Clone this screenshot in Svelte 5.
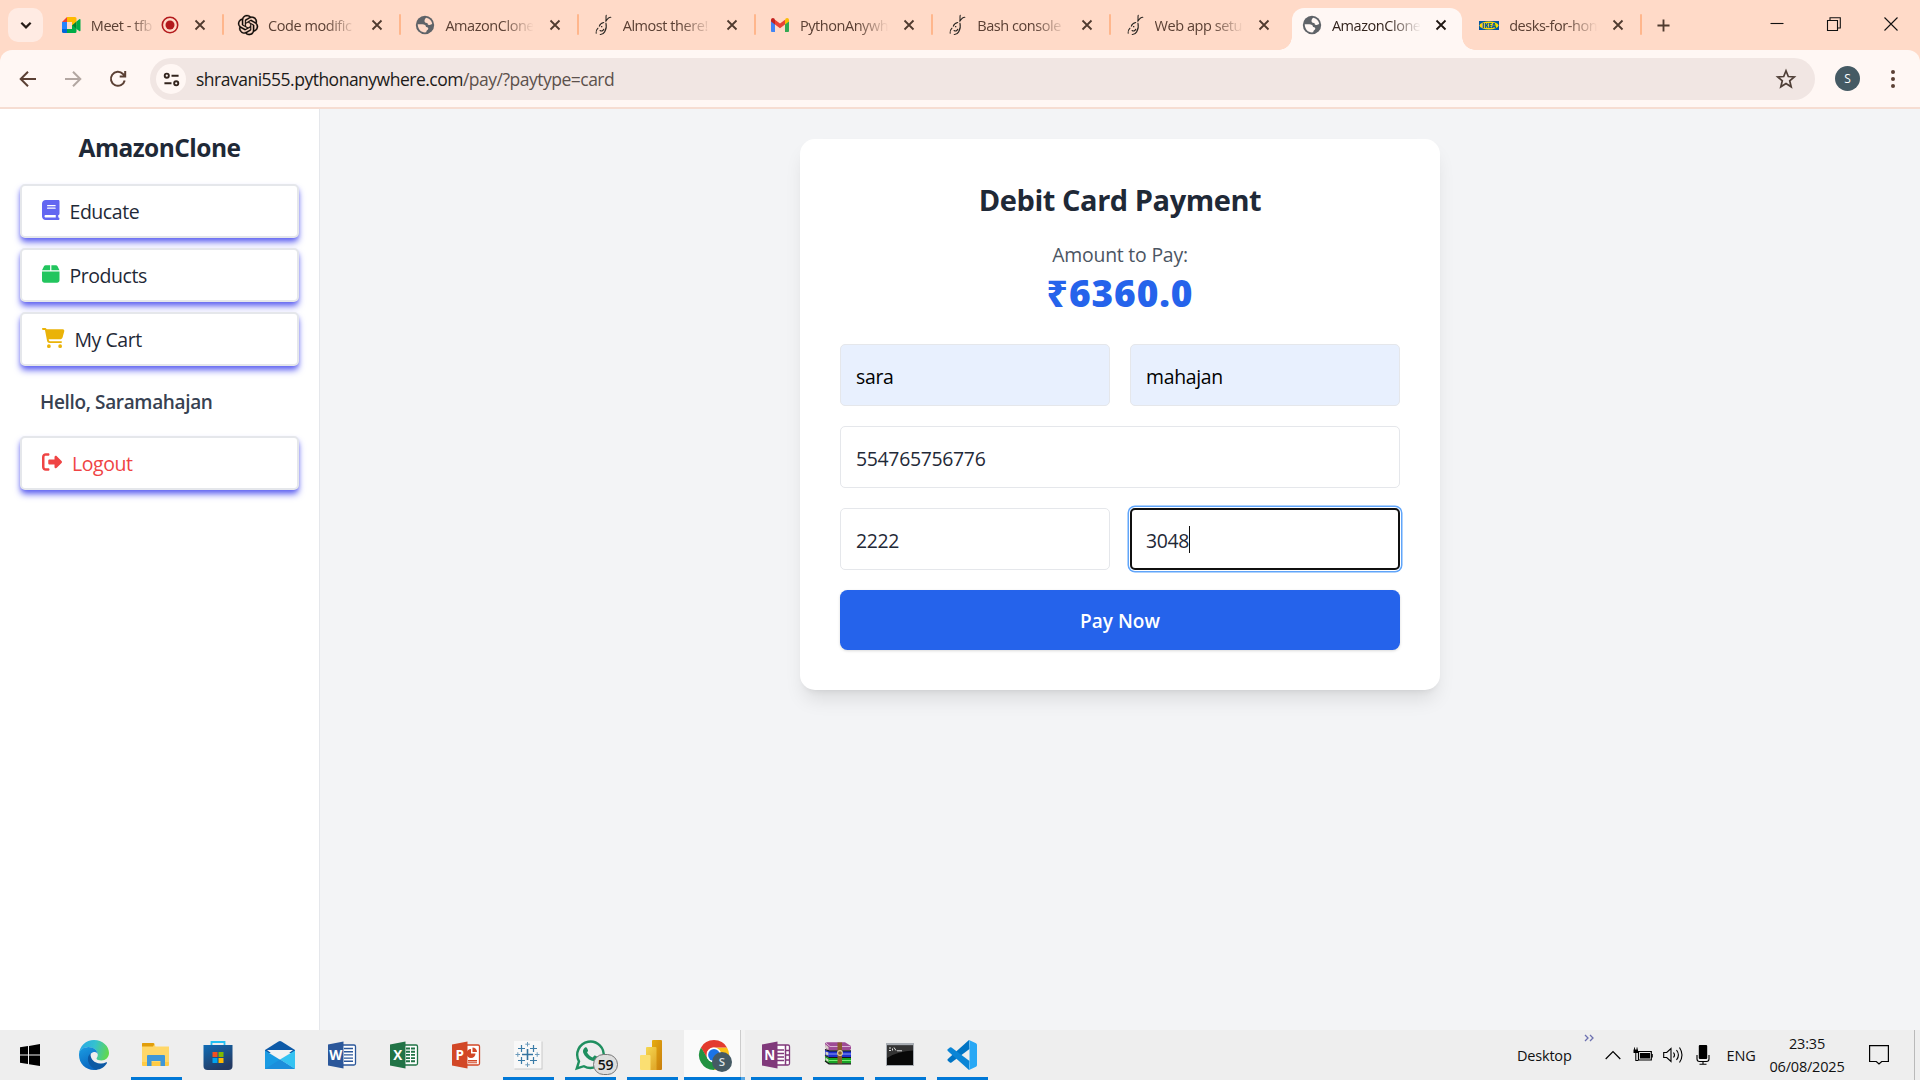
<script>
  const tabs = [
    { icon: 'meet', title: 'Meet - tfb', recording: true },
    { icon: 'gpt', title: 'Code modific' },
    { icon: 'globe', title: 'AmazonClone' },
    { icon: 'snake', title: 'Almost there!' },
    { icon: 'gmail', title: 'PythonAnywh' },
    { icon: 'snake', title: 'Bash console' },
    { icon: 'snake', title: 'Web app setu' },
    { icon: 'globe', title: 'AmazonClone', active: true },
    { icon: 'ikea', title: 'desks-for-hon' }
  ];

  const apps = [
    { id: 'start' },
    { id: 'edge' },
    { id: 'explorer', open: true },
    { id: 'store' },
    { id: 'mail' },
    { id: 'word' },
    { id: 'excel' },
    { id: 'powerpoint' },
    { id: 'tableau', open: true },
    { id: 'whatsapp', open: true },
    { id: 'powerbi', open: true },
    { id: 'chrome', open: true, current: true },
    { id: 'onenote', open: true },
    { id: 'winrar', open: true },
    { id: 'cmd', open: true },
    { id: 'vscode', open: true }
  ];

  const office = {
    word: { color: '#2b579a', letter: 'W' },
    excel: { color: '#217346', letter: 'X' },
    powerpoint: { color: '#d24726', letter: 'P' },
    onenote: { color: '#80397b', letter: 'N' }
  };

  const links = [
    {
      label: 'Educate', color: 'indigo', w: 448,
      d: 'M96 0C43 0 0 43 0 96V416c0 53 43 96 96 96H384h32c17.7 0 32-14.3 32-32s-14.3-32-32-32V384c17.7 0 32-14.3 32-32V32c0-17.7-14.3-32-32-32H384 96zm0 384H352v64H96c-17.7 0-32-14.3-32-32s14.3-32 32-32zm32-240c0-8.8 7.2-16 16-16H336c8.8 0 16 7.2 16 16s-7.2 16-16 16H144c-8.8 0-16-7.2-16-16zm16 48H336c8.8 0 16 7.2 16 16s-7.2 16-16 16H144c-8.8 0-16-7.2-16-16s7.2-16 16-16z'
    },
    {
      label: 'Products', color: 'green', w: 448,
      d: 'M50.7 58.5L0 160H208V32H93.7C75.5 32 58.9 42.3 50.7 58.5zM240 160H448L397.3 58.5C389.1 42.3 372.5 32 354.3 32H240V160zm208 32H0V416c0 35.3 28.7 64 64 64H384c35.3 0 64-28.7 64-64V192z'
    },
    {
      label: 'My Cart', color: 'yellow', w: 576,
      d: 'M0 24C0 10.7 10.7 0 24 0H69.5c22 0 41.5 12.8 50.6 32h411c26.3 0 45.5 25 38.6 50.4l-41 152.3c-8.5 31.4-37 53.3-69.5 53.3H170.7l5.4 28.5c2.2 11.3 12.1 19.5 23.6 19.5H488c13.3 0 24 10.7 24 24s-10.7 24-24 24H199.7c-34.6 0-64.3-24.6-70.7-58.5L77.4 54.5c-.7-3.8-4-6.5-7.9-6.5H24C10.7 48 0 37.3 0 24zM128 464a48 48 0 1 1 96 0 48 48 0 1 1 -96 0zm336-48a48 48 0 1 1 0 96 48 48 0 1 1 0-96z'
    }
  ];
  const logout =
    'M377.9 105.9L500.7 228.7c7.2 7.2 11.3 17.1 11.3 27.3s-4.1 20.1-11.3 27.3L377.9 406.1c-6.4 6.4-15 9.9-24 9.9c-18.7 0-33.9-15.2-33.9-33.9l0-62.1-128 0c-17.7 0-32-14.3-32-32l0-64c0-17.7 14.3-32 32-32l128 0 0-62.1c0-18.7 15.2-33.9 33.9-33.9c9 0 17.6 3.6 24 9.9zM160 96L96 96c-17.7 0-32 14.3-32 32l0 256c0 17.7 14.3 32 32 32l64 0c17.7 0 32 14.3 32 32s-14.3 32-32 32l-64 0c-53 0-96-43-96-96L0 128C0 75 43 32 96 32l64 0c17.7 0 32 14.3 32 32s-14.3 32-32 32z';
  const knot =
    'M22.2819 9.8211a5.9847 5.9847 0 0 0-.5157-4.9108 6.0462 6.0462 0 0 0-6.5098-2.9A6.0651 6.0651 0 0 0 4.9807 4.1818a5.9847 5.9847 0 0 0-3.9977 2.9 6.0462 6.0462 0 0 0 .7427 7.0966 5.98 5.98 0 0 0 .511 4.9107 6.051 6.051 0 0 0 6.5146 2.9001A5.9847 5.9847 0 0 0 13.2599 24a6.0557 6.0557 0 0 0 5.7718-4.2058 5.9894 5.9894 0 0 0 3.9977-2.9001 6.0557 6.0557 0 0 0-.7475-7.0729zm-9.022 12.6081a4.4755 4.4755 0 0 1-2.8764-1.0408l.1419-.0804 4.7783-2.7582a.7948.7948 0 0 0 .3927-.6813v-6.7369l2.02 1.1686a.071.071 0 0 1 .038.052v5.5826a4.504 4.504 0 0 1-4.4945 4.4944zm-9.6607-4.1254a4.4708 4.4708 0 0 1-.5346-3.0137l.142.0852 4.783 2.7582a.7712.7712 0 0 0 .7806 0l5.8428-3.3685v2.3324a.0804.0804 0 0 1-.0332.0615L9.74 19.9502a4.4992 4.4992 0 0 1-6.1408-1.6464zM2.3408 7.8956a4.485 4.485 0 0 1 2.3655-1.9728V11.6a.7664.7664 0 0 0 .3879.6765l5.8144 3.3543-2.0201 1.1685a.0757.0757 0 0 1-.071 0l-4.8303-2.7865A4.504 4.504 0 0 1 2.3408 7.872zm16.5963 3.8558L13.1038 8.364 15.1192 7.2a.0757.0757 0 0 1 .071 0l4.8303 2.7913a4.4944 4.4944 0 0 1-.6765 8.1042v-5.6772a.79.79 0 0 0-.407-.667zm2.0107-3.0231l-.142-.0852-4.7735-2.7818a.7759.7759 0 0 0-.7854 0L9.409 9.2297V6.8974a.0662.0662 0 0 1 .0284-.0615l4.8303-2.7866a4.4992 4.4992 0 0 1 6.6802 4.66zM8.3065 12.863l-2.02-1.1638a.0804.0804 0 0 1-.038-.0567V6.0742a4.4992 4.4992 0 0 1 7.3757-3.4537l-.142.0805L8.704 5.459a.7948.7948 0 0 0-.3927.6813zm1.0976-2.3654l2.602-1.4998 2.6069 1.4998v2.9994l-2.5974 1.4997-2.6067-1.4997Z';
</script>

{#snippet favicon(name, active)}
  {#if name === 'meet'}
    <svg class="fav" viewBox="0 0 20 20">
      <path d="M1 7 6 2v5z" fill="#ea4335" />
      <path d="M1 7h5v7H1z" fill="#2684fc" />
      <path d="M1 14h5v4H2.500Q1 18 1 16.500z" fill="#0066da" />
      <path d="M6 2h8q1.500 0 1.500 1.500V10H11V7H6z" fill="#ffba00" />
      <path d="M6 14h5v-4h4.500v6.500q0 1.500-1.500 1.500H6z" fill="#00ac47" />
      <path d="M11.500 10 15.500 6.500v7.500z" fill="#00832d" />
      <path d="m15.500 6.500 2.700-2.300q1.300-.8 1.300.7v10.300q0 1.500-1.300.7L15.500 14z" fill="#00ac47" />
    </svg>
  {:else if name === 'gpt'}
    <svg class="fav" viewBox="1 1 22 22"><path d={knot} fill="#120c09" stroke="#120c09" stroke-width=".3" transform="translate(.9 .9) scale(.93)" /></svg>
  {:else if name === 'globe'}
    <svg class="fav globe" class:light={active} viewBox="0 0 20 20">
      <circle cx="10" cy="10" r="9.200" />
      <path d="M11.300 2.700c3 .5 5.300 2.800 5.900 5.800-.8 1.200-1.800 1.600-3.200 1.400-1.200-.2-1.600-1-1.500-2-1.500.3-3-.4-3-1.800 0-1.700.8-2.900 1.800-3.400z" />
      <path d="M2.700 9.200h4.600c2.300 0 3.700 1 3.700 2.700 1.800-.1 2.600.9 2.200 2.100-.4 1.300-1.900 1.200-2 3.300-4.600.7-8.300-2.700-8.500-8.100z" />
    </svg>
  {:else if name === 'snake'}
    <svg class="fav tall" viewBox="0 0 20 24" fill="none" stroke="#2b2723" stroke-width="1.200" stroke-linecap="round">
      <path d="M13.500 1.500c-.6 2 .2 3.500-.4 6M18.500 3.500c-2.400 0-4 2-5.400 4.500" />
      <path d="M13.200 10c1 3.500.3 6.500-1.400 9.500-1 1.800-2.600 2.900-4.800 2.800" />
      <path d="M10.800 9.200C8 9.800 6.500 11.300 6 13.200M4.500 15.500c-1.600 1.500-2.300 3.300-2 5.500M6.800 18c1.500 1 3.300.5 4-1.300M8.300 13.800h.5" />
    </svg>
  {:else if name === 'gmail'}
    <svg class="fav" viewBox="0 0 20 20">
      <path d="M1 6v10.200Q1 17 2 17h3V8.500z" fill="#4285f4" />
      <path d="M15 8.500V17h3q1 0 1-.8V6z" fill="#34a853" />
      <path d="M15 5v4.500l4-3V5c0-2-2-2.700-3.300-1.600z" fill="#fbbc04" />
      <path d="M5 9.500V4.800L10 8.600l5-3.800v4.700l-5 3.700z" fill="#ea4335" />
      <path d="M1 5v1.500l4 3V4.800l-.7-1.400C3 2.300 1 3 1 5z" fill="#c5221f" />
    </svg>
  {:else}
    <svg class="fav" viewBox="0 0 20 20">
      <path d="M0 6h20v9H0z" fill="#0058a3" />
      <ellipse cx="10" cy="10.500" rx="9.500" ry="4" fill="#ffdb00" />
      <text x="10" y="12.700" text-anchor="middle" class="ikea">IKEA</text>
    </svg>
  {/if}
{/snippet}

{#snippet cross()}
  <svg class="close" viewBox="0 0 12 12"><path d="m1.500 1.500 9 9m0-9-9 9" /></svg>
{/snippet}

{#snippet appIcon(id)}
  {#if id === 'start'}
    <svg class="icon" viewBox="0 0 30 30"><path d="m5 7.300 8-1.300v8.500H5zm9-1.400 11-1.800v10.400H14zM5 15.500h8V24l-8-1.200zm9 0h11V26l-11-1.800z" /></svg>
  {:else if id === 'edge'}
    <svg class="icon" viewBox="0 0 30 30">
      <defs>
        <linearGradient id="e1" x1="0" y1="0.300" x2="1" y2="0.500"><stop offset="0" stop-color="#28a8e6" /><stop offset="0.500" stop-color="#35c1cf" /><stop offset="1" stop-color="#62d84c" /></linearGradient>
        <linearGradient id="e2" x1="0" y1="0" x2="0.400" y2="1"><stop offset="0" stop-color="#1b9de2" /><stop offset="1" stop-color="#0a67c0" /></linearGradient>
      </defs>
      <path d="M0 14C.5 6 7 0 15 0c8.500 0 15 6 15 13 0 4.500-3.500 7.500-7.500 7.500-3 0-5-1-5-2 0-.8 1.300-1.500 1.300-3.800C18.800 11 15 7 9.500 7 5 7 1.500 9.500 0 14z" fill="url(#e1)" />
      <path d="M0 15C0 10.500 4 7 9.500 7c5 0 9.200 3.500 9.300 7.500 0-1.500-2-3-4-2.500-4 1-5.300 5-4 9 1.500 4.500 5 7 8 8.500C9 32 0 25 0 15z" fill="url(#e2)" />
      <path d="M11.500 13.500C7 16.500 8 26 17 29.700c5 0 9-3 11-6.700.3-.7-.2-1-.8-.7-2 1-4 1.400-6 1.200-6-.5-9.800-4-9.700-10z" fill="#0c59a4" />
    </svg>
  {:else if id === 'explorer'}
    <svg class="icon" viewBox="0 0 30 30">
      <path d="M1 3.500Q1 3 2 3h10q1 0 1.500 1l1 2.500H28v18q0 1.500-1.500 1.500h-24Q1 26 1 24.500z" fill="#ffd768" />
      <path d="M1 3.500Q1 3 2 3h10q1 0 1.500 1L12 6.500H1z" fill="#e19d0a" />
      <path d="M1 22h27v2.500q0 1.500-1.500 1.500h-24Q1 26 1 24.500z" fill="#ffcb45" />
      <path d="M6 26V16q0-1 1-1h16q1 0 1 1v10h-4.500v-5h-9v5z" fill="#3f97d8" />
    </svg>
  {:else if id === 'store'}
    <svg class="icon" viewBox="0 0 30 30">
      <defs><linearGradient id="s1" x1="0" y1="0" x2="0.500" y2="1"><stop offset="0" stop-color="#0f6cb6" /><stop offset="1" stop-color="#243a62" /></linearGradient></defs>
      <path d="M8.500 5.500V2h13v3.500" fill="none" stroke="#22c0f4" stroke-width="1.800" />
      <path d="M.5 5h29v21q0 4-4 4h-21q-4 0-4-4z" fill="url(#s1)" />
      <path d="M9.500 12h5v5h-5z" fill="#f25022" /><path d="M15.500 12h5v5h-5z" fill="#7fba00" />
      <path d="M9.500 18h5v5h-5z" fill="#00a4ef" /><path d="M15.500 18h5v5h-5z" fill="#ffb900" />
    </svg>
  {:else if id === 'mail'}
    <svg class="icon" viewBox="0 0 30 30">
      <path d="M0 10 13.500 1.500q1.500-.8 3 0L30 10v3H0z" fill="#0d5aa7" />
      <path d="M2 10h26L15 20z" fill="#f3f3f3" />
      <path d="M0 10.500 30 29H0z" fill="#1a9be3" />
      <path d="M30 10.500V29L15 19.500z" fill="#35c3f2" />
      <path d="M0 29 15 19.500 30 29z" fill="#1b8edb" />
    </svg>
  {:else if office[id]}
    <svg class="icon" viewBox="0 0 30 30">
      <path d="M14 5h13q1.500 0 1.500 1.500v17Q28.500 25 27 25H14z" fill="#fff" stroke={office[id].color} stroke-width="1.300" />
      {#if id === 'word'}
        <path d="M17 8.500h9m-9 3.200h9m-9 3.200h9m-9 3.200h9m-9 3.200h9" stroke="#2b579a" stroke-width="1.400" />
      {:else if id === 'excel'}
        <path d="M17 8.500h4m1 0h4m-9 3.200h4m1 0h4m-9 3.200h4m1 0h4m-9 3.200h4m1 0h4m-9 3.200h4m1 0h4" stroke="#217346" stroke-width="1.900" />
      {:else if id === 'powerpoint'}
        <path d="M20 9a4.500 4.500 0 1 0 4.500 4.500H20zM17 20h9v1.500h-9zm0 2.300h9v1h-9z" fill="#d24726" /><path d="M21.500 7.500A4.500 4.500 0 0 1 26 12h-4.500z" fill="#d24726" />
      {:else}
        <path d="M16 10h7m-7 3.500h7m-7 3.500h7m-7 3.500h7M24.500 5v20M25 10.500h3.500M25 15h3.500M25 20h3.500" stroke="#80397b" stroke-width="1.500" />
      {/if}
      <path d="M1 4.500 16.500 1.500v27L1 25.500z" fill={office[id].color} />
      <text x="8.700" y="20" text-anchor="middle" class="letter">{office[id].letter}</text>
    </svg>
  {:else if id === 'tableau'}
    <svg class="icon" viewBox="0 0 30 30" fill="none">
      <path d="M1.500 1.500h28v28h-28z" fill="#c9c9c9" /><path d="M1 1h27.500v27.500H1z" fill="#f8f8f8" />
      <path d="M14.500 9v11M9 14.500h11" stroke="#33739f" stroke-width="1.600" />
      <path d="M8.500 5v7M5 8.500h7M20.500 5v7M17 8.500h7M8.500 17v7M5 20.500h7M20.500 17v7M17 20.500h7" stroke="#3b7ca8" stroke-width="1.200" />
      <path d="M14.500 2v4.500M12.300 4.200h4.500M14.500 22.500V27M12.300 24.800h4.500M4.800 12.300v4.500M2.500 14.500H7M24.200 12.300v4.500M22 14.500h4.500" stroke="#6b9abb" stroke-width="1" />
    </svg>
  {:else if id === 'whatsapp'}
    <svg class="icon" viewBox="0 0 30 30">
      <path d="M1.800 28.400 4 21.300a13.200 13.200 0 1 1 4.900 4.900z" fill="none" stroke="#1f8f5f" stroke-width="2.400" />
      <path d="M10 7.500c.8-.6 1.700-.3 2 .4l1 2.300c.2.700-.2 1.300-1 2.100.9 2.200 3 4 5.500 5.200l1.500-1.600c.5-.5 1-.4 1.500-.1l2.300 1.100c1 .5.500 1.900-.1 2.700-1.300 1.600-3.500 1.900-5.700 1.200-4.300-1.400-7.500-4.600-8.800-8.100C7.500 10.500 8.500 8.500 10 7.500z" fill="#1f8f5f" />
    </svg>
    <span class="badge">59</span>
  {:else if id === 'powerbi'}
    <svg class="icon" viewBox="0 0 30 30">
      <defs>
        <linearGradient id="p1" x1="0" y1="0" x2="1" y2="1"><stop offset="0" stop-color="#e6ad10" /><stop offset="1" stop-color="#c87e0e" /></linearGradient>
        <linearGradient id="p2" x1="0" y1="0" x2="0.600" y2="1"><stop offset="0" stop-color="#f6d751" /><stop offset="1" stop-color="#e2ac2d" /></linearGradient>
      </defs>
      <path d="M15 1q0-1 1-1h8q1 0 1 1v28q0 1-1 1h-9z" fill="url(#p1)" />
      <path d="M9 8q0-1 1-1h8.500q1 0 1 1v22H9z" fill="url(#p2)" />
      <path d="M3 16q0-1 1-1h8.500q1 0 1 1v14H4q-1 0-1-1z" fill="#fbdf72" />
    </svg>
  {:else if id === 'chrome'}
    <svg class="icon" viewBox="0 0 30 30">
      <path d="M15 15 28 7.500A15 15 0 0 1 15 30z" fill="#fbc116" />
      <path d="M15 7.500h13l-6.500 11z" fill="#fbc116" />
      <path d="M21.500 18.800 15 30A15 15 0 0 1 2 7.500L8.500 18.700z" fill="#229342" />
      <path d="M2 7.500Q6 0 15 0q9 0 13 7.500H15q-5 0-7.200 5L8.500 18.700z" fill="#e33b2e" />
      <path d="M2 7.500 8.500 18.700 5 19z" fill="#229342" />
      <circle cx="15" cy="15" r="7.500" fill="#fff" /><circle cx="15" cy="15" r="5.900" fill="#1a73e8" />
    </svg>
    <span class="profile">S</span>
  {:else if id === 'winrar'}
    <svg class="icon" viewBox="0 0 30 30">
      <path d="m2 3 2-.8h18l6 3.800v3l-1 1H6L3 9z" fill="#9d4b95" /><path d="m3 3.200 4 3.300h20.500" fill="none" stroke="#e0bcdc" stroke-width=".9" />
      <path d="m2 10 4 1h22v6H6l-4-2z" fill="#1c2fd0" /><path d="M6 14h22" stroke="#8f9df5" stroke-width="1" />
      <path d="m2 16 4 2h22v5.500H6L2 21z" fill="#19a325" /><path d="M6 20.500h22" stroke="#79ee75" stroke-width="1" />
      <path d="m2 9.500 4 1.300h22M2 15.500l4 2h22M2 21l4 2.800h22" fill="none" stroke="#161616" stroke-width="1.200" />
      <path d="m2.500 4.500 3 2.500v2.500l-3-1.500zm0 7 3 1v3l-3-1zm0 6 3 2v2.500l-3-2z" fill="#d6d2c4" />
      <path d="M14.500 2.500h4.500v21h-4.500z" fill="#8a5a2c" /><circle cx="17" cy="13" r="2.400" fill="none" stroke="#ded09b" stroke-width="1.100" />
    </svg>
  {:else if id === 'cmd'}
    <svg class="icon" viewBox="0 0 30 30">
      <path d="M1 3h28v23H1z" fill="#a9aeb4" /><path d="M2 5.500h26V25H2z" fill="#080808" /><path d="M2 5.500h26v5Q13 11 2 18z" fill="#343434" />
      <path d="M4 8h2m-2 2.500h2m1.500-2v2M9 7.500l2 3m1 .3h5" stroke="#ddd" stroke-width="1" fill="none" />
    </svg>
  {:else}
    <svg class="icon" viewBox="0 0 30 30">
      <path d="M22 0 0.800 19q-.8.800 0 1.700l2 1.700q.8.600 1.700 0L22.500 9z" fill="#0074c4" />
      <path d="M22 30 .8 11q-.8-.8 0-1.700l2-1.700q.8-.6 1.700 0L22.500 21z" fill="#0a85d6" />
      <path d="M22.500 3v24L22 30l7-3.300q1-.5 1-1.700V5q0-1.200-1-1.700L22 0z" fill="#29a8f5" />
    </svg>
  {/if}
{/snippet}

<div class="screen">
  <header class="tabstrip">
    <button class="search" aria-label="Search tabs"><svg viewBox="0 0 12 12"><path d="m2 4 4 4 4-4" /></svg></button>
    <div class="tabs">
      {#each tabs as tab, i}
        <div class="tab" class:active={tab.active} class:separated={!tab.active && i !== 6}>
          {@render favicon(tab.icon, tab.active)}
          <span class="title" class:short={tab.recording}>{tab.title}</span>
          {#if tab.recording}
            <svg class="rec" viewBox="0 0 18 18"><circle cx="9" cy="9" r="7.700" fill="none" stroke="#b3191c" stroke-width="1.600" /><circle cx="9" cy="9" r="4.500" fill="#b3191c" /></svg>
          {/if}
          {@render cross()}
        </div>
      {/each}
    </div>
    <svg class="plus" viewBox="0 0 14 14"><path d="M7 .5v13M.5 7h13" /></svg>
    <div class="window">
      <svg viewBox="0 0 14 14"><path d="M.5 6.500h13" /></svg>
      <svg viewBox="0 0 14 14"><path d="M.5 3.500h10v10H.5zM3 3.500V.7h10.300V11h-2.800" /></svg>
      <svg viewBox="0 0 14 14"><path d="m.5.5 13 13m0-13-13 13" /></svg>
    </div>
  </header>

  <div class="toolbar">
    <nav class="nav">
      <svg viewBox="0 0 20 20"><path d="M18 10H3m7-7.300L2.700 10l7.300 7.300" /></svg>
      <svg class="off" viewBox="0 0 20 20"><path d="M2 10h15m-7-7.300 7.300 7.300-7.300 7.300" /></svg>
      <svg viewBox="0 0 20 20"><path d="M16.700 11.500A7 7 0 1 1 15 5l2 2m.2-5v5.500h-5.500" /></svg>
    </nav>
    <div class="omnibox">
      <span class="info"><svg viewBox="0 0 18 18"><circle cx="4" cy="5" r="2.200" /><circle cx="14" cy="13" r="2.200" /><path d="M9 5h7.500M1.500 13H9" /></svg></span>
      <span class="url">shravani555.pythonanywhere.com<em>/pay/?paytype=card</em></span>
      <svg class="star" viewBox="0 0 20 20"><path d="m10 1.800 2.300 5.700 6 .4-4.600 3.900 1.500 6L10 14.500l-5.200 3.300 1.500-6L1.700 7.900l6-.4z" /></svg>
    </div>
    <span class="avatar">S</span>
    <svg class="dots" viewBox="0 0 6 20"><circle cx="3" cy="3" r="2" /><circle cx="3" cy="10" r="2" /><circle cx="3" cy="17" r="2" /></svg>
  </div>

  <div class="page">
    <aside>
      <h1>AmazonClone</h1>
      <ul>
        {#each links as link}
          <li>
            <svg class={link.color} class:wide={link.w === 576} viewBox="0 0 {link.w} 512"><path d={link.d} /></svg>
            <span>{link.label}</span>
          </li>
        {/each}
      </ul>
      <p class="hello">Hello, Saramahajan</p>
      <div class="logout">
        <svg viewBox="0 0 512 512"><path d={logout} /></svg>
        <span>Logout</span>
      </div>
    </aside>
    <main>
      <section class="card">
        <h2>Debit Card Payment</h2>
        <p class="label">Amount to Pay:</p>
        <p class="amount">₹6360.0</p>
        <div class="fields">
          <div class="field filled"><span>sara</span></div>
          <div class="field filled"><span>mahajan</span></div>
          <div class="field full"><span>554765756776</span></div>
          <div class="field"><span>2222</span></div>
          <div class="field focused"><span>3048</span><i class="caret"></i></div>
        </div>
        <button class="pay">Pay Now</button>
      </section>
    </main>
  </div>

  <footer>
    <div class="apps">
      {#each apps as app}
        <div class="app" class:open={app.open} class:current={app.current}>{@render appIcon(app.id)}</div>
      {/each}
    </div>
    <div class="tray">
      <span class="desk">Desktop</span>
      <svg class="more" viewBox="0 0 10 8"><path d="m1 1 3 3-3 3m5-6 3 3-3 3" /></svg>
      <svg class="up" viewBox="0 0 16 16"><path d="m.7 12 7.300-7.500L15.300 12" /></svg>
      <svg class="sys" viewBox="0 0 20 20">
        <path d="M5.500 6.500h12.800v8.500H5.500z" fill="none" stroke="#000" /><path d="M7 8h10v5.500H7zM18.500 9h1.300v3.500h-1.300zM.5 4.500h4.500v3.500H.5zM2.300 8h1v7h2v1h-3zM1 2.500h.9v2H1zm2.600 0h.9v2h-.9z" />
      </svg>
      <svg class="sys line" viewBox="0 0 20 20"><path d="M.7 7.500h3L8 3.500v13l-4.300-4H.7zM10.500 7.500q2 2.500 0 5M13.500 5q3.800 5 0 10M16.500 2.500q5 7.500 0 15" /></svg>
      <svg class="sys" viewBox="0 0 20 20"><rect x="5.800" y="0" width="8.400" height="14" rx="1" /><path d="M4 10v4q0 2.500 2.500 2.500h7q2.500 0 2.500-2.500v-4M10 16.500v3M6.500 19.300h7" fill="none" stroke="#000" stroke-width="1.100" /></svg>
      <span class="lang">ENG</span>
      <div class="clock"><span>23:35</span><span>06/08/2025</span></div>
      <svg class="note" viewBox="0 0 20 20"><path d="M.6.700h18.800v15.800h-6.700L10 19l-2.700-2.500H.6z" /></svg>
    </div>
  </footer>
</div>

<style>
  :global(body) { margin: 0; overflow: hidden; }
  * { box-sizing: border-box; }
  h1, h2, p, ul { margin: 0; padding: 0; }
  .screen {
    width: 1920px; height: 1080px; display: flex; flex-direction: column;
    font-family: 'Open Sans', 'Noto Sans', sans-serif; background: #ffdac8;
  }
  svg { display: block; flex: none; overflow: visible; }
  button { border: 0; padding: 0; font: inherit; }

  .tabstrip { height: 50px; flex: none; display: flex; padding-left: 8px; align-items: flex-start; }
  .search { width: 35px; height: 34px; margin: 8px 4.800px 0 0; border-radius: 10px; background: #ffebe3; display: grid; place-items: center; }
  .search svg { width: 14px; height: 14px; fill: none; stroke: #261b16; stroke-width: 1.900; }
  .tabs { display: flex; height: 50px; }
  .tab { position: relative; width: 177.300px; height: 50px; padding: 0 18px 0 13px; display: flex; align-items: center; color: #5b4034; }
  .separated::after { content: ''; position: absolute; right: 1px; top: 14px; width: 2px; height: 21px; border-radius: 1px; background: #ffb68c; }
  .fav { width: 20px; height: 20px; }
  .fav.tall { height: 22px; }
  .globe circle { fill: #5f6368; }
  .globe path { fill: #ffdac8; }
  .globe.light path { fill: #fff7f4; }
  .title {
    width: 88px; margin-left: 10px; white-space: nowrap; font-size: 14.500px; letter-spacing: -0.450px; line-height: 24px; padding-top: 1px;
    -webkit-mask: linear-gradient(90deg, #000 65%, transparent 101%); mask: linear-gradient(90deg, #000 65%, transparent 101%);
  }
  .title.short { width: 63px; }
  .rec { width: 18px; height: 18px; margin-left: 7px; }
  .close { width: 12px; height: 12px; margin-left: auto; fill: none; stroke: #4f3a2f; stroke-width: 1.800; margin-right: 1px; }
  .active { color: #33241d; z-index: 1; }
  .active .close { stroke: #1f1612; }
  .active::before {
    content: ''; position: absolute; z-index: -1; left: 3.500px; right: 4.500px; top: 8px; bottom: 0;
    background: #fff7f4; border-radius: 12px 12px 0 0;
  }
  .active::after {
    content: ''; position: absolute; z-index: -1; left: -9.500px; right: -8.500px; bottom: 0; height: 13px;
    background:
      radial-gradient(circle at 0 0, transparent 12.500px, #fff7f4 13px) left / 13px 13px no-repeat,
      radial-gradient(circle at 100% 0, transparent 12.500px, #fff7f4 13px) right / 13px 13px no-repeat;
  }
  .plus { width: 13px; height: 13px; margin: 18.500px 0 0 13.500px; stroke: #4f3a2f; stroke-width: 2; }
  .window { margin: 17px 22px 0 auto; display: flex; gap: 43px; }
  .window svg { width: 14px; height: 14px; fill: none; stroke: #111; stroke-width: 1.100; }

  .toolbar { height: 59px; flex: none; display: flex; align-items: flex-start; background: #fff7f4; border-bottom: 2px solid #f6ddd2; border-radius: 12px 12px 0 0; padding: 8px 24px 0 18px; }
  .nav { display: flex; gap: 25px; margin: 10.500px 22px 0 0; }
  .nav svg { width: 20px; height: 20px; fill: none; stroke: #5b4034; stroke-width: 2; }
  .nav .off { stroke: #b3a7a2; }
  .omnibox { width: 1665px; height: 42px; border-radius: 21px; background: #f1e6e3; display: flex; align-items: center; padding: 0 19px 0 6px; }
  .info { width: 30px; height: 30px; border-radius: 50%; background: #fff7f4; display: grid; place-items: center; }
  .info svg { width: 17px; height: 17px; fill: none; stroke: #33241d; stroke-width: 2; }
  .url { margin-left: 10px; font-size: 17.500px; letter-spacing: -0.500px; line-height: 30px; color: #201a18; }
  .url em { font-style: normal; color: #5c514c; }
  .star { margin-left: auto; width: 20px; height: 20px; fill: none; stroke: #4f3f37; stroke-width: 1.700; }
  .avatar { width: 25px; height: 25px; margin: 8px 0 0 20px; border-radius: 50%; background: #455a64; color: #fff; font-size: 12px; line-height: 25px; text-align: center; }
  .dots { width: 6px; height: 20px; margin: 10.500px 0 0 29.500px; fill: #5b4034; }

  .page { flex: 1; display: flex; min-height: 0; }
  aside { width: 320px; background: #fff; border-right: 1px solid #e5e7eb; padding: 19px 20px 0; font-size: 19.500px; letter-spacing: -0.450px; color: #1f2937; }
  h1 { font-size: 24.500px; letter-spacing: -0.550px; line-height: 40px; font-weight: 700; text-align: center; color: #1f2937; margin-bottom: 16px; }
  ul { list-style: none; display: flex; flex-direction: column; gap: 10px; }
  li, .logout {
    height: 54px; width: 279px; border: 2px solid #e5e7eb; border-radius: 5px; background: #fff; padding: 0 20px;
    display: flex; align-items: center; gap: 10px; box-shadow: 0 5px 7.500px -1px #6366f1, 0 2.500px 5px -2.500px #6366f1;
  }
  li span, .logout span { line-height: 30px; padding-top: 2px; }
  li svg, .logout svg { width: 17.500px; height: 20px; margin-bottom: 2px; }
  li svg.wide { width: 22.500px; }
  .indigo { fill: #6366f1; } .green { fill: #22c55e; } .yellow { fill: #eab308; }
  .hello { font-size: 19px; font-weight: 600; letter-spacing: -0.350px; color: #374151; line-height: 30px; padding-left: 20px; margin: 21px 0 19px; }
  .logout { color: #ef4444; }
  .logout svg { width: 20px; fill: #ef4444; }

  main { flex: 1; background: #f3f4f6; display: flex; justify-content: center; align-items: flex-start; padding-top: 30px; }
  .card { width: 640px; height: 551px; background: #fff; border-radius: 15px; padding: 40px; box-shadow: 0 12.500px 19px -4px rgba(0, 0, 0, 0.100), 0 5px 7.500px -5px rgba(0, 0, 0, 0.100); }
  h2 { font-size: 29px; letter-spacing: -0.450px; line-height: 40px; font-weight: 700; text-align: center; color: #1f2937; margin: 1px 0 20px; }
  .label { text-align: center; font-size: 19.400px; letter-spacing: -0.200px; line-height: 30px; color: #4b5563; }
  .amount { text-align: center; font-size: 37px; letter-spacing: 0.900px; line-height: 46px; font-weight: 800; color: #2563eb; margin-bottom: 28px; }
  .fields { display: grid; grid-template-columns: 1fr 1fr; gap: 20px; margin-bottom: 20px; }
  .field { height: 62px; border: 1px solid #e5e7eb; border-radius: 5px; padding: 2px 15px 0; display: flex; align-items: center; font-size: 19.400px; letter-spacing: -0.300px; color: #1f2937; }
  .field.filled { background: #e8f0fe; color: #000; }
  .field.full { grid-column: span 2; }
  .field.focused { border: 2px solid #101010; padding: 2px 14px 0; box-shadow: 0 0 0 1px #fff, 0 0 0 2.500px #60a5fa; }
  .caret { width: 1px; height: 27px; margin-bottom: 2px; background: #111; }
  .pay { display: block; width: 100%; height: 60px; padding-top: 2px; border-radius: 7.500px; background: #2563eb; color: #fff; font-size: 19px; font-weight: 600; box-shadow: 0 1px 3px rgba(0, 0, 0, 0.150); }

  footer { height: 50px; flex: none; background: #eee; display: flex; justify-content: space-between; color: #111; }
  .apps { display: flex; }
  .app { position: relative; width: 62px; height: 50px; display: grid; place-items: center; }
  .app:first-child { width: 63px; padding-right: 3px; }
  .icon { width: 30px; height: 30px; }
  .app.open::after { content: ''; position: absolute; left: 5.500px; width: 51px; bottom: 0; height: 3px; background: #0078d7; }
  .app.current { background: linear-gradient(90deg, transparent 1px, #fafafa 1px 57px, #ccc 57px 58px, #f3f3f3 58px); }
  .app.current::after { left: 1px; width: 61px; background: linear-gradient(90deg, #0078d7 57px, #58a7e4 57px); }
  .badge { position: absolute; left: 34px; top: 24px; width: 25px; height: 21px; border-radius: 11px; border: 1px solid #777; background: #dedede; font-size: 14px; line-height: 19px; font-weight: 600; letter-spacing: -0.300px; text-align: center; }
  .profile { position: absolute; left: 29px; top: 22px; width: 20px; height: 20px; border-radius: 50%; background: #455a64; color: #dde3e6; font-size: 11.500px; line-height: 20px; font-weight: 600; text-align: center; }
  .letter { font-size: 13.500px; font-weight: 700; fill: #fff; }
  .ikea { font-size: 6px; font-weight: 800; fill: #0058a3; }

  .tray { width: 398px; display: flex; align-items: center; padding-right: 25px; border-right: 1px solid #b9b9b9; margin-right: 5px; font-size: 14.500px; letter-spacing: -0.200px; }
  .tray svg { fill: none; stroke: #000; stroke-width: 1.200; }
  .more { width: 10px; height: 8px; margin: 0 11px 35px 12px; }
  .tray .more { stroke: #6c70b0; stroke-width: 1.300; }
  .up { width: 16px; height: 16px; margin-right: 12px; }
  .sys { width: 20px; height: 20px; margin-right: 10px; }
  .tray .sys { fill: #000; stroke: none; }
  .tray .sys.line { fill: none; stroke: #000; stroke-width: 1.100; }
  .lang { margin-left: 4px; }
  .clock { width: 76px; margin-left: auto; display: flex; flex-direction: column; align-items: center; line-height: 23px; white-space: nowrap; }
  .note { width: 20px; height: 20px; margin-left: 24px; }
</style>
